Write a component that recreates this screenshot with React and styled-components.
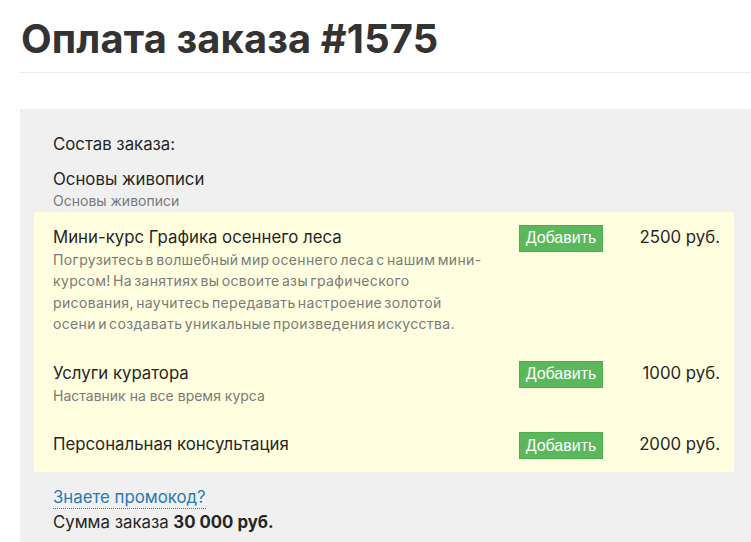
import React from "react";
import styled, { createGlobalStyle } from "styled-components";

const Global = createGlobalStyle`
  html, body { margin: 0; padding: 0; background: #fff; }
  body { font-family: Inter, "Noto Sans", sans-serif; color: #222; overflow: hidden; }
`;

const Page = styled.div`
  padding-left: 20px;
  width: 731px;
`;

const Title = styled.h1`
  margin: 0;
  padding: 14px 0 0 1px;
  font-size: 39.8px;
  line-height: 50px;
  font-weight: 700;
  color: #333;
  letter-spacing: 0.15px;
`;

const Divider = styled.div`
  margin-top: 8px;
  height: 1px;
  background: #ebebeb;
`;

const Panel = styled.section`
  margin-top: 36px;
  background: #f0f0f0;
  padding: 23px 0 12px;
`;

const Inner = styled.div`
  padding: 0 33px;
`;

const Label = styled.div`
  font-size: 16.8px;
  line-height: 24px;
  color: #262626;
  margin-bottom: 12px;
`;

const ItemTitle = styled.div`
  font-size: 16.8px;
  line-height: ${(p) => p.$lh || "24px"};
  color: #262626;
`;

const ItemSub = styled.div`
  font-size: 14px;
  line-height: 21.5px;
  color: #7a7a7a;
`;

const Description = styled(ItemSub)`
  max-width: 431px;
  word-spacing: -2px;
  letter-spacing: 0.35px;
`;

const Offers = styled.div`
  margin-left: 14px;
  width: 700px;
  background: #ffffdf;
  padding: 0 14px 0 19px;
  box-sizing: border-box;
`;

const Row = styled.div`
  display: grid;
  grid-template-columns: 1fr 84px 117px;
  align-items: start;
  padding: 13px 0;
`;

const AddButton = styled.button`
  height: 27px;
  width: 84px;
  padding: 0;
  background: #5cb85c;
  border: 1px solid #4cae4c;
  color: #fff;
  font-family: "Liberation Sans", Arial, sans-serif;
  font-size: 16px;
  border-radius: 0;
  cursor: pointer;
`;

const Price = styled.div`
  text-align: right;
  font-size: 16.8px;
  line-height: 24px;
  color: #262626;
`;

const Footer = styled.div`
  padding: 15px 33px 0;
`;

const PromoLink = styled.a`
  display: inline-block;
  font-size: 16.8px;
  line-height: 21px;
  color: #2779b5;
  text-decoration: none;
  border-bottom: 1px dotted #2779b5;
  cursor: pointer;
`;

const Total = styled.div`
  font-size: 16.8px;
  line-height: 24px;
  margin-top: 1px;
  color: #262626;
  b { font-weight: 700; }
`;

const offers = [
  {
    title: "Мини-курс Графика осеннего леса",
    desc: "Погрузитесь в волшебный мир осеннего леса с нашим мини-курсом! На занятиях вы освоите азы графического рисования, научитесь передавать настроение золотой осени и создавать уникальные произведения искусства.",
    price: "2500 руб.",
  },
  { title: "Услуги куратора", sub: "Наставник на все время курса", price: "1000 руб." },
  { title: "Персональная консультация", price: "2000 руб." },
];

export default function App() {
  return (
    <>
      <Global />
      <Page>
        <Title>Оплата заказа #1575</Title>
        <Divider />
        <Panel>
          <Inner>
            <Label>Состав заказа:</Label>
            <ItemTitle $lh="22px">Основы живописи</ItemTitle>
            <ItemSub>Основы живописи</ItemSub>
          </Inner>
          <Offers>
            {offers.map((o) => (
              <Row key={o.title}>
                <div>
                  <ItemTitle>{o.title}</ItemTitle>
                  {o.desc && <Description>{o.desc}</Description>}
                  {o.sub && <ItemSub>{o.sub}</ItemSub>}
                </div>
                <AddButton>Добавить</AddButton>
                <Price>{o.price}</Price>
              </Row>
            ))}
          </Offers>
          <Footer>
            <PromoLink>Знаете промокод?</PromoLink>
            <Total>
              Сумма заказа <b>30 000 руб.</b>
            </Total>
          </Footer>
        </Panel>
      </Page>
    </>
  );
}
